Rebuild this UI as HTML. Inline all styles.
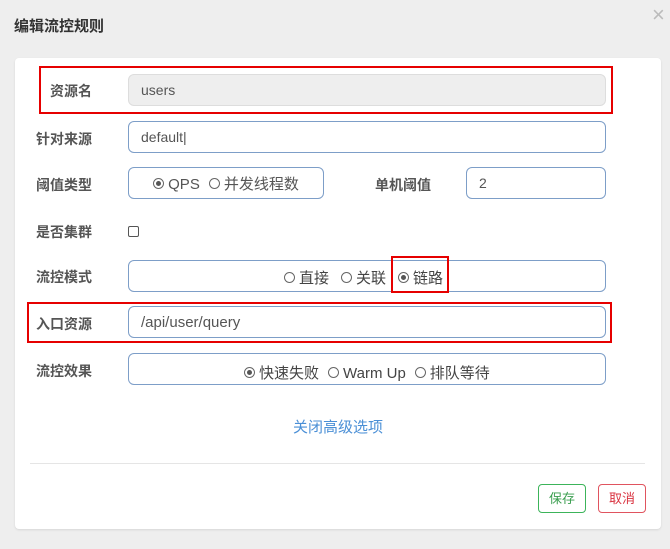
<!DOCTYPE html>
<html><head><meta charset="utf-8"><style>
body{margin:0;width:670px;height:549px;background:#eeeeee;font-family:"Liberation Sans","Noto Sans CJK SC",sans-serif;font-size:14px;color:#333;position:relative;overflow:hidden}
.a{position:absolute}
.title{left:14px;top:15px;font-size:15px;font-weight:bold;color:#333}
.x{left:652px;top:2px;font-size:22px;color:#bbb}
.panel{left:15px;top:58px;width:646px;height:471px;background:#fff;border-radius:4px;box-shadow:0 1px 2px rgba(0,0,0,.1)}
.lbl{font-weight:bold;color:#555;font-size:14px}
.in{border:1px solid #7d9ec8;border-radius:6px;box-sizing:border-box;height:32px;line-height:30px;padding-left:12px;color:#555;background:#fff}
.red{border:2px solid #e60000;box-sizing:border-box}
.c{text-align:center;padding:0;font-size:15px}
.r{display:inline-block;width:9px;height:9px;border:1px solid #666;border-radius:50%;vertical-align:0px;margin-right:4px;position:relative;background:#fff}
.r.on:after{content:"";position:absolute;left:2px;top:2px;width:5px;height:5px;border-radius:50%;background:#555}
.sp{display:inline-block;width:9px}
.sp2{display:inline-block;width:12px}
.btn{height:29px;width:48px;box-sizing:border-box;border-radius:4px;text-align:center;line-height:27px;font-size:13px;background:#fff}
</style></head><body>
<div class="a title">编辑流控规则</div>
<div class="a x">×</div>
<div class="a panel"></div>

<div class="a red" style="left:39px;top:66px;width:574px;height:48px"></div>
<div class="a lbl" style="left:50px;top:81px">资源名</div>
<div class="a in" style="left:128px;top:74px;width:478px;background:#eee;border-color:#ddd">users</div>

<div class="a lbl" style="left:36px;top:129px">针对来源</div>
<div class="a in" style="left:128px;top:121px;width:478px">default|</div>

<div class="a lbl" style="left:36px;top:175px">阈值类型</div>
<div class="a in c" style="left:128px;top:167px;width:196px;line-height:34px"><span class="r on"></span>QPS<span class="sp"></span><span class="r"></span>并发线程数</div>
<div class="a lbl" style="left:375px;top:175px">单机阈值</div>
<div class="a in" style="left:466px;top:167px;width:140px">2</div>

<div class="a lbl" style="left:36px;top:222px">是否集群</div>
<div class="a" style="left:128px;top:226px;width:9px;height:9px;border:1px solid #555;border-radius:2px"></div>

<div class="a lbl" style="left:36px;top:267px">流控模式</div>
<div class="a in" style="left:128px;top:260px;width:478px"></div>
<div class="a" style="left:284px;top:267px;font-size:15px;color:#444"><span class="r"></span>直接<span class="sp2"></span><span class="r"></span>关联<span class="sp2"></span><span class="r on"></span>链路</div>
<div class="a red" style="left:391px;top:256px;width:58px;height:37px"></div>

<div class="a red" style="left:27px;top:302px;width:585px;height:41px"></div>
<div class="a lbl" style="left:36px;top:314px">入口资源</div>
<div class="a in" style="left:128px;top:306px;width:478px;font-size:15px;line-height:31px">/api/user/query</div>

<div class="a lbl" style="left:36px;top:361px">流控效果</div>
<div class="a in" style="left:128px;top:353px;width:478px"></div>
<div class="a" style="left:244px;top:362px;font-size:15px;color:#444"><span class="r on"></span>快速失败<span class="sp"></span><span class="r"></span>Warm Up<span class="sp"></span><span class="r"></span>排队等待</div>

<div class="a" style="left:0;width:676px;top:416px;text-align:center;color:#4a8fd6;font-size:15px">关闭高级选项</div>
<div class="a" style="left:30px;top:463px;width:615px;height:1px;background:#e5e5e5"></div>
<div class="a btn" style="left:538px;top:484px;border:1px solid #3cb45a;color:#3a9e4f">保存</div>
<div class="a btn" style="left:598px;top:484px;border:1px solid #e0545f;color:#d9323f">取消</div>
</body></html>
